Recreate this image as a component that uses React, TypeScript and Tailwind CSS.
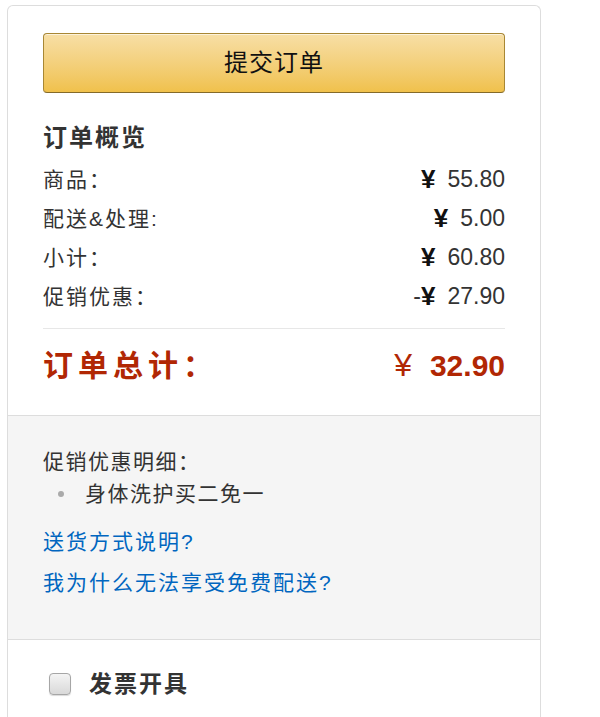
const cjk = "font-['Liberation_Sans','Noto_Sans_CJK_SC',sans-serif]";

function Row({ label, value, minus }: { label: string; value: string; minus?: boolean }) {
  return (
    <div className="flex h-[39px] items-center justify-between">
      <span className="text-[21px] tracking-[2px] text-[#333]">{label}</span>
      <span className="flex items-center text-[23px] text-[#333]">
        {minus && <span>-</span>}
        <span className="text-[26px] font-bold text-[#111]">¥</span>
        <span className="ml-[12px]">{value}</span>
      </span>
    </div>
  );
}

export default function App() {
  return (
    <div className={`min-h-[717px] bg-white ${cjk}`}>
      <div className="ml-[7px] mt-[5px] w-[534px] rounded-t-[6px] border border-b-0 border-[#dddddd]">
        {/* summary */}
        <div className="border-b border-[#dddddd] px-[35px] pb-[26px] pt-[27px]">
          <button className="flex h-[60px] w-full items-center justify-center rounded-[4px] border border-[#a88734] border-b-[#846a29] bg-gradient-to-b from-[#f7dfa5] to-[#f0c14b] text-[24px] tracking-[1px] text-[#111] shadow-[inset_0_1px_0_rgba(255,255,255,0.6)]">
            提交订单
          </button>
          <div className="mt-[27px] flex h-[36px] items-center text-[24px] font-bold tracking-[2px] text-[#333]">
            订单概览
          </div>
          <div className="mt-[4px]">
            <Row label="商品：" value="55.80" />
            <Row label="配送&处理:" value="5.00" />
            <Row label="小计：" value="60.80" />
            <Row label="促销优惠：" value="27.90" minus />
          </div>
          <div className="mt-[12px] border-t border-[#e7e7e7]" />
          <div className="mt-[12px] flex h-[48px] items-center justify-between text-[#b12704]">
            <span className="text-[30px] font-bold tracking-[5px]">订单总计：</span>
            <span className="flex items-center">
              <span className="text-[32px]">¥</span>
              <span className="ml-[18px] text-[30px] font-bold">32.90</span>
            </span>
          </div>
        </div>

        {/* promotion details */}
        <div className="border-b border-[#dddddd] bg-[#f5f5f5] px-[35px] pb-[40px] pt-[30px] text-[21px] tracking-[1.5px]">
          <div className="flex h-[32px] items-center text-[#333]">促销优惠明细：</div>
          <ul className="text-[#333]">
            <li className="flex h-[32px] items-center">
              <span className="ml-[15px] mr-[21px] h-[6px] w-[6px] rounded-full bg-[#aaaaaa]" />
              身体洗护买二免一
            </li>
          </ul>
          <a href="#" className="mt-[16px] flex h-[32px] items-center tracking-[2px] text-[#0066c0]">
            送货方式说明?
          </a>
          <a href="#" className="mt-[9px] flex h-[32px] items-center tracking-[2px] text-[#0066c0]">
            我为什么无法享受免费配送?
          </a>
        </div>

        {/* invoice */}
        <div className="h-[100px] px-[35px] pt-[28px]">
          <label className="flex h-[32px] items-center">
            <span className="ml-[6px] h-[22px] w-[22px] rounded-[4px] border border-[#a6a6a6] bg-gradient-to-b from-[#f4f4f4] to-[#d9d9d9] shadow-[0_1px_1px_rgba(0,0,0,0.15)]" />
            <span className="ml-[18px] text-[23px] font-bold tracking-[2px] text-[#333]">发票开具</span>
          </label>
        </div>
      </div>
    </div>
  );
}
